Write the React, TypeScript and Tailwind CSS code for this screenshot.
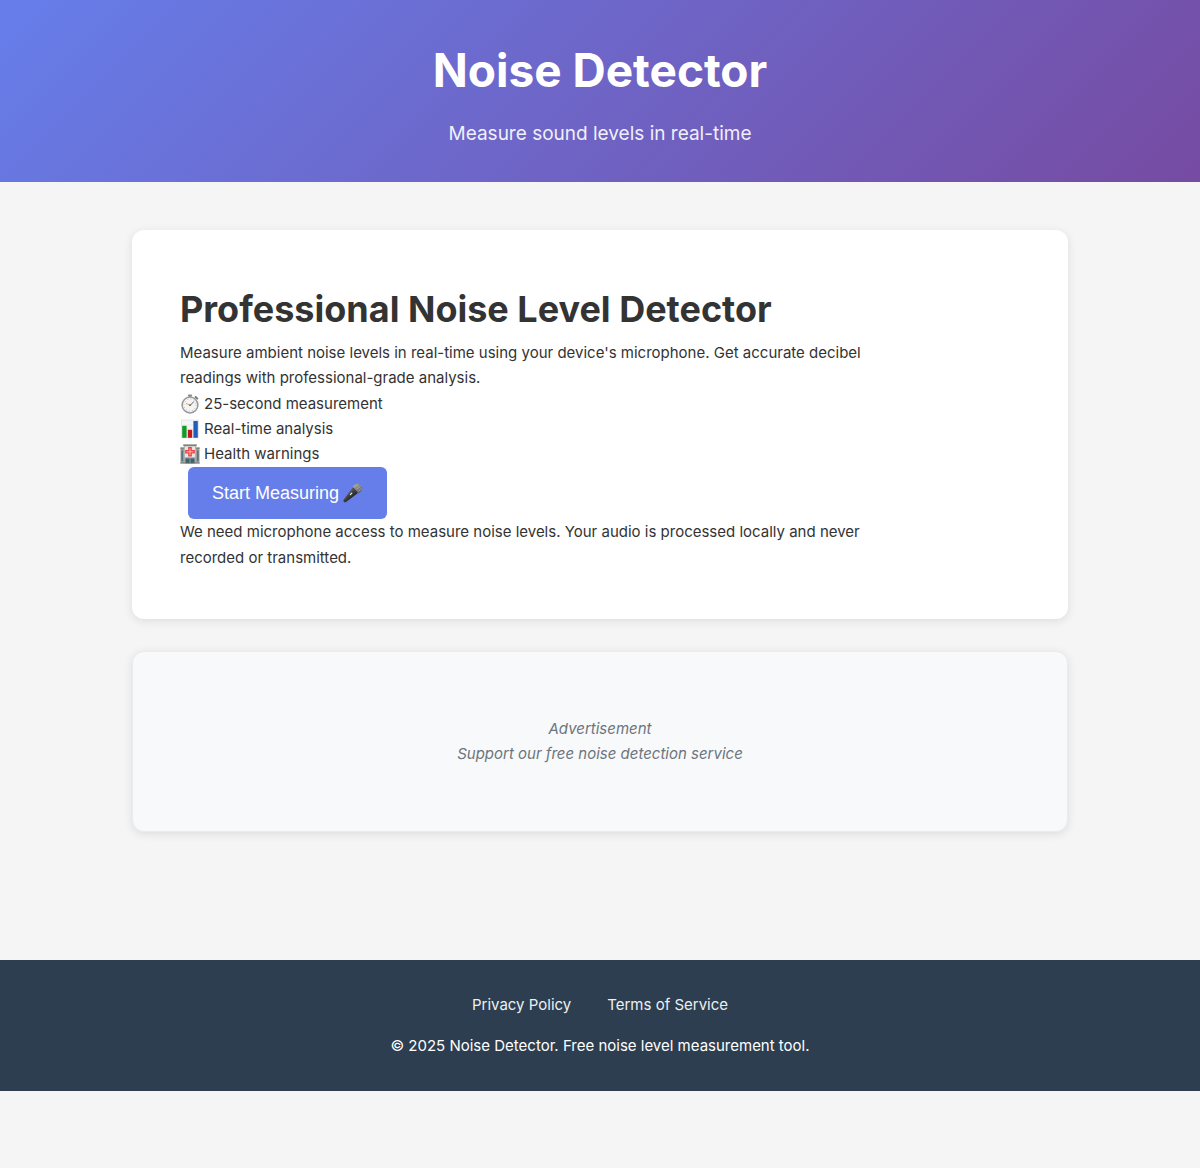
import type { ReactNode } from "react";

function StopwatchIcon() {
  return (
    <svg viewBox="0 0 20 20" className="h-5 w-5 shrink-0" aria-hidden="true">
      <rect x="8" y="0.4" width="4" height="2.2" rx="0.7" fill="#8b8b8b" />
      <rect x="9.2" y="2.2" width="1.6" height="2" fill="#777" />
      <path d="M15.6 3l1.8 1.6" stroke="#777" strokeWidth="1.9" strokeLinecap="round" />
      <circle cx="10" cy="11" r="7.9" fill="#f4f4f4" stroke="#989898" strokeWidth="1.5" />
      <circle cx="10" cy="11" r="6" fill="none" stroke="#999" strokeWidth="0.9" strokeDasharray="0.6 2.54" />
      <path d="M10.2 11.4l3.4-3.6" stroke="#555" strokeWidth="0.9" strokeLinecap="round" />
      <path d="M10 11.2L6.4 9.6" stroke="#e0913a" strokeWidth="0.8" strokeLinecap="round" />
      <circle cx="10" cy="11.2" r="0.9" fill="#666" />
    </svg>
  );
}

function BarChartIcon() {
  return (
    <svg viewBox="0 0 20 20" className="h-5 w-5 shrink-0" aria-hidden="true">
      <rect x="1.4" y="1" width="17.2" height="17.8" fill="#f3f5f6" stroke="#d5dade" strokeWidth="0.6" />
      <path d="M1.4 6h17.2M1.4 10.2h17.2M1.4 14.4h17.2" stroke="#dce3e6" strokeWidth="0.5" />
      <rect x="2.2" y="6.8" width="4.4" height="12" fill="#119a24" />
      <rect x="7.8" y="10.8" width="4.4" height="8" fill="#c5161d" />
      <rect x="13.4" y="2" width="4.4" height="16.8" fill="#1f5dbd" />
    </svg>
  );
}

function HospitalIcon() {
  return (
    <svg viewBox="0 0 20 20" className="h-5 w-5 shrink-0" aria-hidden="true">
      <rect x="0.5" y="4" width="19" height="15.2" fill="#9a9995" />
      <rect x="0.3" y="3.4" width="4.2" height="1.2" fill="#77766f" />
      <rect x="15.5" y="3.4" width="4.2" height="1.2" fill="#77766f" />
      <rect x="3.8" y="1.2" width="12.4" height="18" fill="#aaa9a5" />
      <rect x="3.2" y="0.4" width="13.6" height="1.4" fill="#77766f" />
      <path d="M1.4 6.5h1.6v10.5h-1.6zM17 6.5h1.6v10.5h-1.6z" fill="#527784" />
      <rect x="4.8" y="2.4" width="10.4" height="10.8" fill="#e5e4e4" />
      <path d="M8.2 3h3.6v3h3v3.6h-3v3H8.2v-3h-3V6h3z" fill="#ed3f42" />
      <path d="M10 4.4v6.8M6.6 7.8h6.800" stroke="#ffc4c4" strokeWidth="0.9" />
      <rect x="5.5" y="14.4" width="9" height="4.8" fill="#3f626e" />
      <path d="M10 14.4v4.8" stroke="#a9bfc5" strokeWidth="0.7" />
      <rect x="0.3" y="18.6" width="19.4" height="0.9" fill="#6f716d" />
    </svg>
  );
}

function MicrophoneIcon() {
  return (
    <svg viewBox="0 0 20 20" className="h-5 w-5 shrink-0" aria-hidden="true">
      <defs>
        <linearGradient id="mic-body" x1="4" y1="9" x2="9" y2="14" gradientUnits="userSpaceOnUse">
          <stop offset="0" stopColor="#707070" />
          <stop offset="0.5" stopColor="#454545" />
          <stop offset="1" stopColor="#292929" />
        </linearGradient>
        <linearGradient id="mic-head" x1="11" y1="1" x2="18" y2="9" gradientUnits="userSpaceOnUse">
          <stop offset="0" stopColor="#a3a3a3" />
          <stop offset="1" stopColor="#5c5c5c" />
        </linearGradient>
      </defs>
      <path d="M9.4 4.8L14.6 10.2 3.4 18.8Q1.8 19.8 0.8 18.8T1 16.200Z" fill="url(#mic-body)" />
      <path d="M10.4 2.600Q14 -0.800 17.600 2.200T17.200 9.200L15.200 10.400 9.400 4.400Z" fill="url(#mic-head)" />
      <path d="M12 2.400l5.400 5.600M14 1.600l4.600 4.700M11 4.500l4.500-3.400M13 6.700l5.400-4M14.800 8.700l4-3" stroke="#bdbdbd" strokeWidth="0.400" />
      <path d="M9.800 4.700l4.800 5" stroke="#333" strokeWidth="0.900" />
      <path d="M7.400 11.600l1.400-1.500" stroke="#eee" strokeWidth="1.200" strokeLinecap="round" />
    </svg>
  );
}

function Feature({ icon, children }: { icon: ReactNode; children: ReactNode }) {
  return (
    <li className="flex items-center gap-1">
      {icon}
      <span>{children}</span>
    </li>
  );
}

export default function App() {
  return (
    <div className="min-h-screen bg-[#f5f5f5] font-['Inter',sans-serif] text-[15px] leading-[25px] text-[#333]">
      <header className="bg-[linear-gradient(135deg,#667eea_0%,#764ba2_100%)] px-4 py-8 text-center text-white">
        <h1 className="mb-2 text-[46px] leading-[77px] font-bold">Noise Detector</h1>
        <p className="text-[19px] leading-[33px] opacity-90">Measure sound levels in real-time</p>
      </header>

      <main className="mx-auto flex max-w-[1000px] flex-col gap-8 px-8 py-12">
        <section className="rounded-xl bg-white p-12 shadow-[0_2px_10px_rgba(0,0,0,0.1)]">
          <div className="max-w-[700px]">
            <h2 className="text-4xl leading-[62px] font-bold">Professional Noise Level Detector</h2>
            <p>
              Measure ambient noise levels in real-time using your device's microphone. Get accurate decibel readings
              with professional-grade analysis.
            </p>
            <ul className="py-px">
              <Feature icon={<StopwatchIcon />}>25-second measurement</Feature>
              <Feature icon={<BarChartIcon />}>Real-time analysis</Feature>
              <Feature icon={<HospitalIcon />}>Health warnings</Feature>
            </ul>
            <button
              type="button"
              className="mx-2 flex h-[52px] cursor-pointer items-center gap-1 rounded-md bg-[#667eea] px-6 font-['Liberation_Sans',sans-serif] text-lg text-white"
            >
              Start Measuring
              <MicrophoneIcon />
            </button>
            <p className="leading-[26px]">
              We need microphone access to measure noise levels. Your audio is processed locally and never recorded or
              transmitted.
            </p>
          </div>
        </section>

        <aside className="rounded-xl border border-[#e9ecef] bg-[#f8f9fb] px-8 py-16 text-center text-[#6c757d] italic shadow-[0_2px_10px_rgba(0,0,0,0.1)]">
          <p>Advertisement</p>
          <p className="leading-[26px]">Support our free noise detection service</p>
        </aside>
      </main>

      <footer className="mt-20 bg-[#2c3e50] px-4 py-8 text-center text-white">
        <nav className="mb-4 flex justify-center gap-9 text-[#ecf0f1]">
          <a href="#privacy">Privacy Policy</a>
          <a href="#terms">Terms of Service</a>
        </nav>
        <p className="leading-[26px]">© 2025 Noise Detector. Free noise level measurement tool.</p>
      </footer>
    </div>
  );
}
